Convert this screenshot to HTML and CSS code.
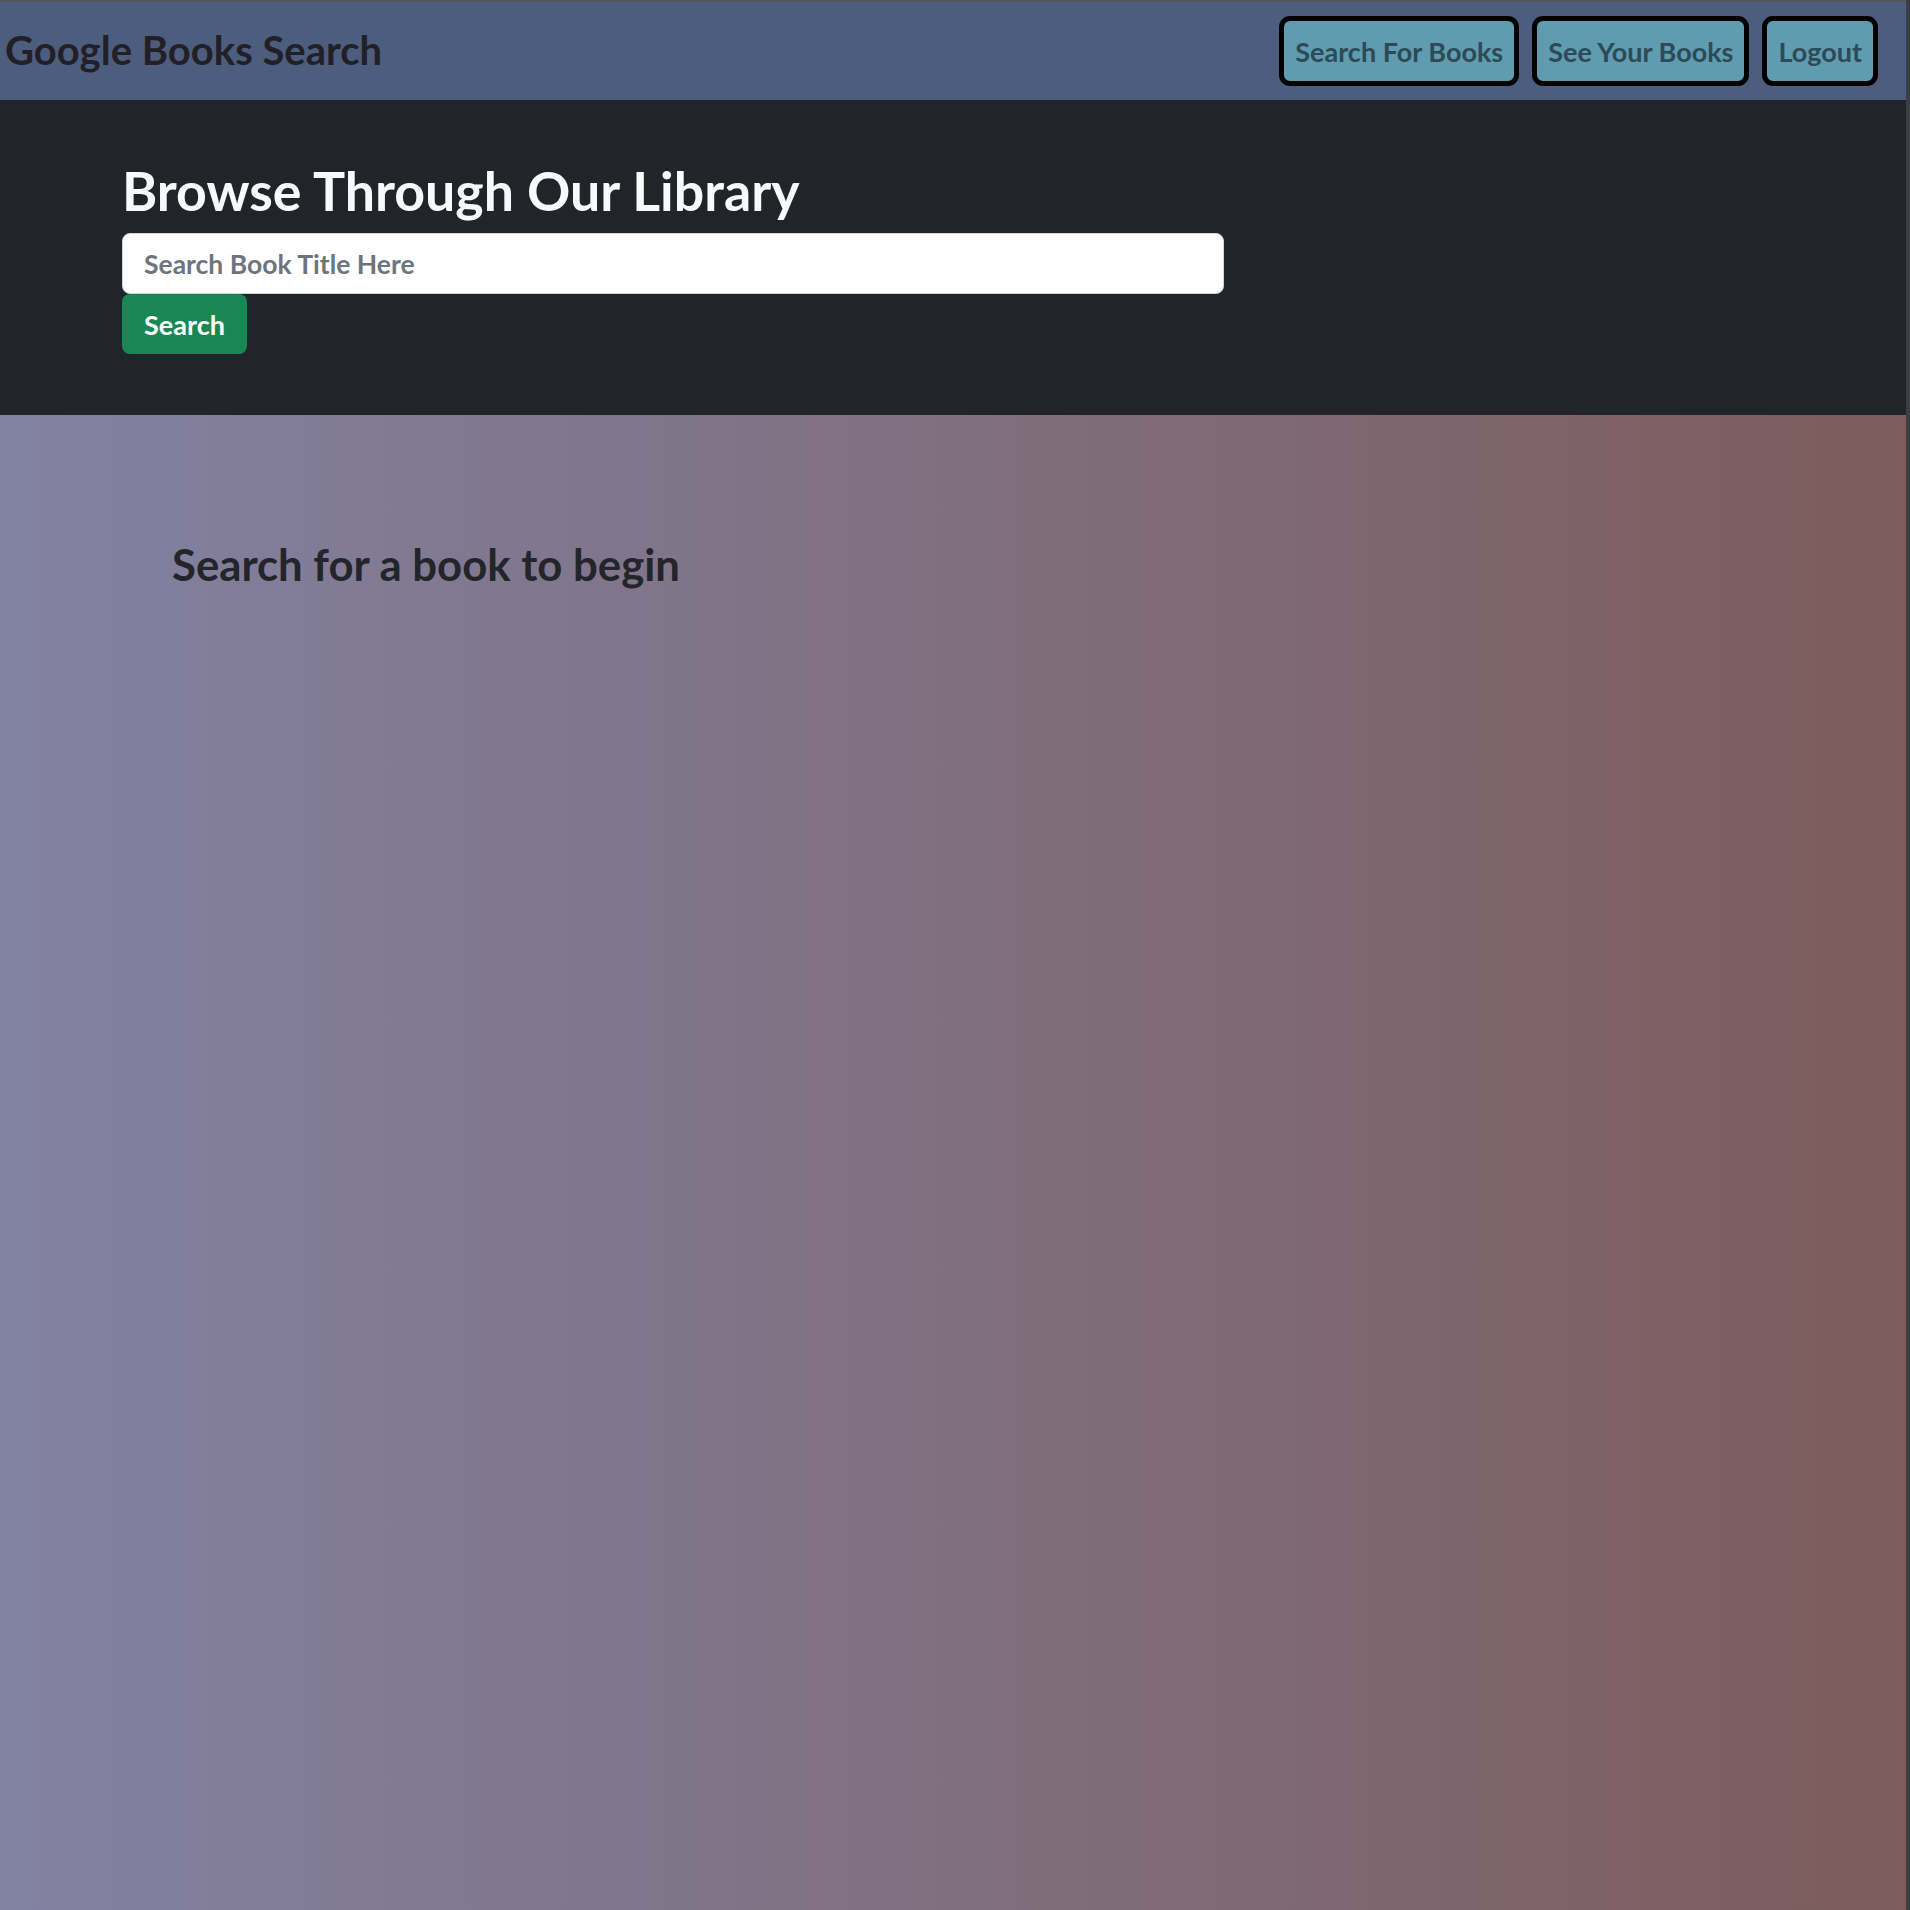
FILE: index.html
```html
<!DOCTYPE html>
<html lang="en">
<head>
<meta charset="utf-8">
<title>Google Books Search</title>
<link rel="stylesheet" href="styles.css">
</head>
<body>
<div class="page">
  <nav class="navbar">
    <a class="brand" href="#">Google Books Search</a>
    <div class="nav-links">
      <button class="nav-btn">Search For Books</button>
      <button class="nav-btn">See Your Books</button>
      <button class="nav-btn">Logout</button>
    </div>
  </nav>
  <section class="hero">
    <h1 class="hero-title">Browse Through Our Library</h1>
    <form class="search-form">
      <input class="search-input" type="text" placeholder="Search Book Title Here">
      <button class="search-btn" type="button">Search</button>
    </form>
  </section>
  <main class="results">
    <h2 class="results-title">Search for a book to begin</h2>
  </main>
</div>
<div class="edge"></div>
</body>
</html>
```
FILE: styles.css
```css
html, body {
  margin: 0;
  padding: 0;
  height: 100%;
}
body {
  display: flex;
  background: #3b3e44;
  font-family: "Lato", "Noto Sans", sans-serif;
  font-weight: 700;
}
.page {
  width: 1906px;
  min-height: 1910px;
  display: flex;
  flex-direction: column;
  background: linear-gradient(to right, #8282a2, #7d5c5c);
}
.edge {
  flex: 1;
  background: #3b3e44;
}
.navbar {
  height: 98px;
  border-top: 2px solid #555;
  background: #4c5d7e;
  display: flex;
  align-items: center;
  justify-content: space-between;
  padding: 0 28px 0 5px;
}
.brand {
  color: #221f27;
  text-decoration: none;
  font-size: 40px;
  line-height: 1;
  padding-bottom: 2px;
}
.nav-links {
  display: flex;
  gap: 13px;
}
.nav-btn {
  height: 70px;
  border: 5px solid #000;
  border-radius: 11px;
  background: #5f9cb0;
  color: #2d4a56;
  font-family: inherit;
  font-weight: 700;
  font-size: 27px;
  padding: 0 11px;
}
.hero {
  background: #212529;
  padding: 55px 0 61px 122px;
}
.hero-title {
  margin: 0 0 8px;
  color: #f8f9fa;
  font-size: 53.7px;
  line-height: 70px;
}
.search-form {
  display: flex;
  flex-direction: column;
  align-items: flex-start;
}
.search-input {
  box-sizing: border-box;
  width: 1102px;
  height: 61px;
  border: 1px solid #ced4da;
  border-radius: 8px;
  padding: 0 21px;
  font-family: inherit;
  font-weight: 700;
  font-size: 26.5px;
  color: #212529;
  background: #fff;
}
.search-input::placeholder {
  color: #6c757d;
}
.search-btn {
  height: 60px;
  width: 125px;
  border: none;
  border-radius: 8px;
  background: #198754;
  color: #fff;
  font-family: inherit;
  font-weight: 700;
  font-size: 27px;
  padding: 0;
}
.results {
  padding: 124px 0 0 172px;
}
.results-title {
  margin: 0;
  color: #23252b;
  font-size: 43.7px;
  line-height: 50px;
}
```
